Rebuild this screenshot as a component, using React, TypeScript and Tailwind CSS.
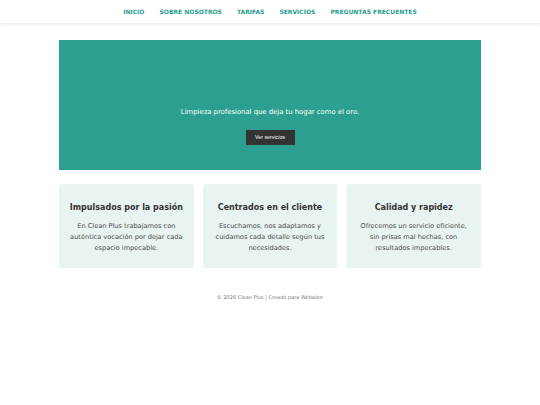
import React from 'react';

const NAV = ['INICIO', 'SOBRE NOSOTROS', 'TARIFAS', 'SERVICIOS', 'PREGUNTAS FRECUENTES'];

const FEATURES = [
  { title: 'Impulsados por la pasión', text: 'En Clean Plus trabajamos con auténtica vocación por dejar cada espacio impecable.' },
  { title: 'Centrados en el cliente', text: 'Escuchamos, nos adaptamos y cuidamos cada detalle según tus necesidades.' },
  { title: 'Calidad y rapidez', text: 'Ofrecemos un servicio eficiente, sin prisas mal hechas, con resultados impecables.' },
];

const App: React.FC = () => {
  return (
    <div className="min-h-[405px] bg-white font-['DejaVu_Sans',Verdana,sans-serif]">
      {/* NAV */}
      <nav className="h-[24px] flex items-center justify-center gap-[15px] shadow-[0_1px_2px_rgba(0,0,0,0.08)] border-b border-[#eeeeee]">
        {NAV.map((item) => (
          <a key={item} className="text-[6px] font-bold text-[#2a9d8f]">{item}</a>
        ))}
      </nav>

      <main className="w-[422px] mx-auto pt-[16px]">
        {/* HERO */}
        <section className="h-[130px] bg-[#2c9f90] flex flex-col items-center justify-end pb-[25px]">
          <p className="text-[6.85px] text-white">Limpieza profesional que deja tu hogar como el oro.</p>
          <button className="mt-[13px] w-[49px] h-[15px] bg-[#333333] text-white text-[5.3px] font-['Liberation_Sans',Arial,sans-serif]">
            Ver servicios
          </button>
        </section>

        {/* FEATURES */}
        <section className="grid grid-cols-3 gap-[9px] mt-[14px]">
          {FEATURES.map((f) => (
            <div key={f.title} className="h-[84px] bg-[#e8f4f1] rounded-[3px] px-[9px] pt-[18px] text-center">
              <h3 className="text-[8px] font-bold text-[#333333] whitespace-nowrap">{f.title}</h3>
              <p className="mt-[7px] text-[6.6px] leading-[11px] text-[#4a4a4a]">{f.text}</p>
            </div>
          ))}
        </section>

        <footer className="mt-[26px] text-center text-[5px] text-[#777777]">
          © 2026 Clean Plus | Creado para Webador
        </footer>
      </main>
    </div>
  );
};

export default App;
